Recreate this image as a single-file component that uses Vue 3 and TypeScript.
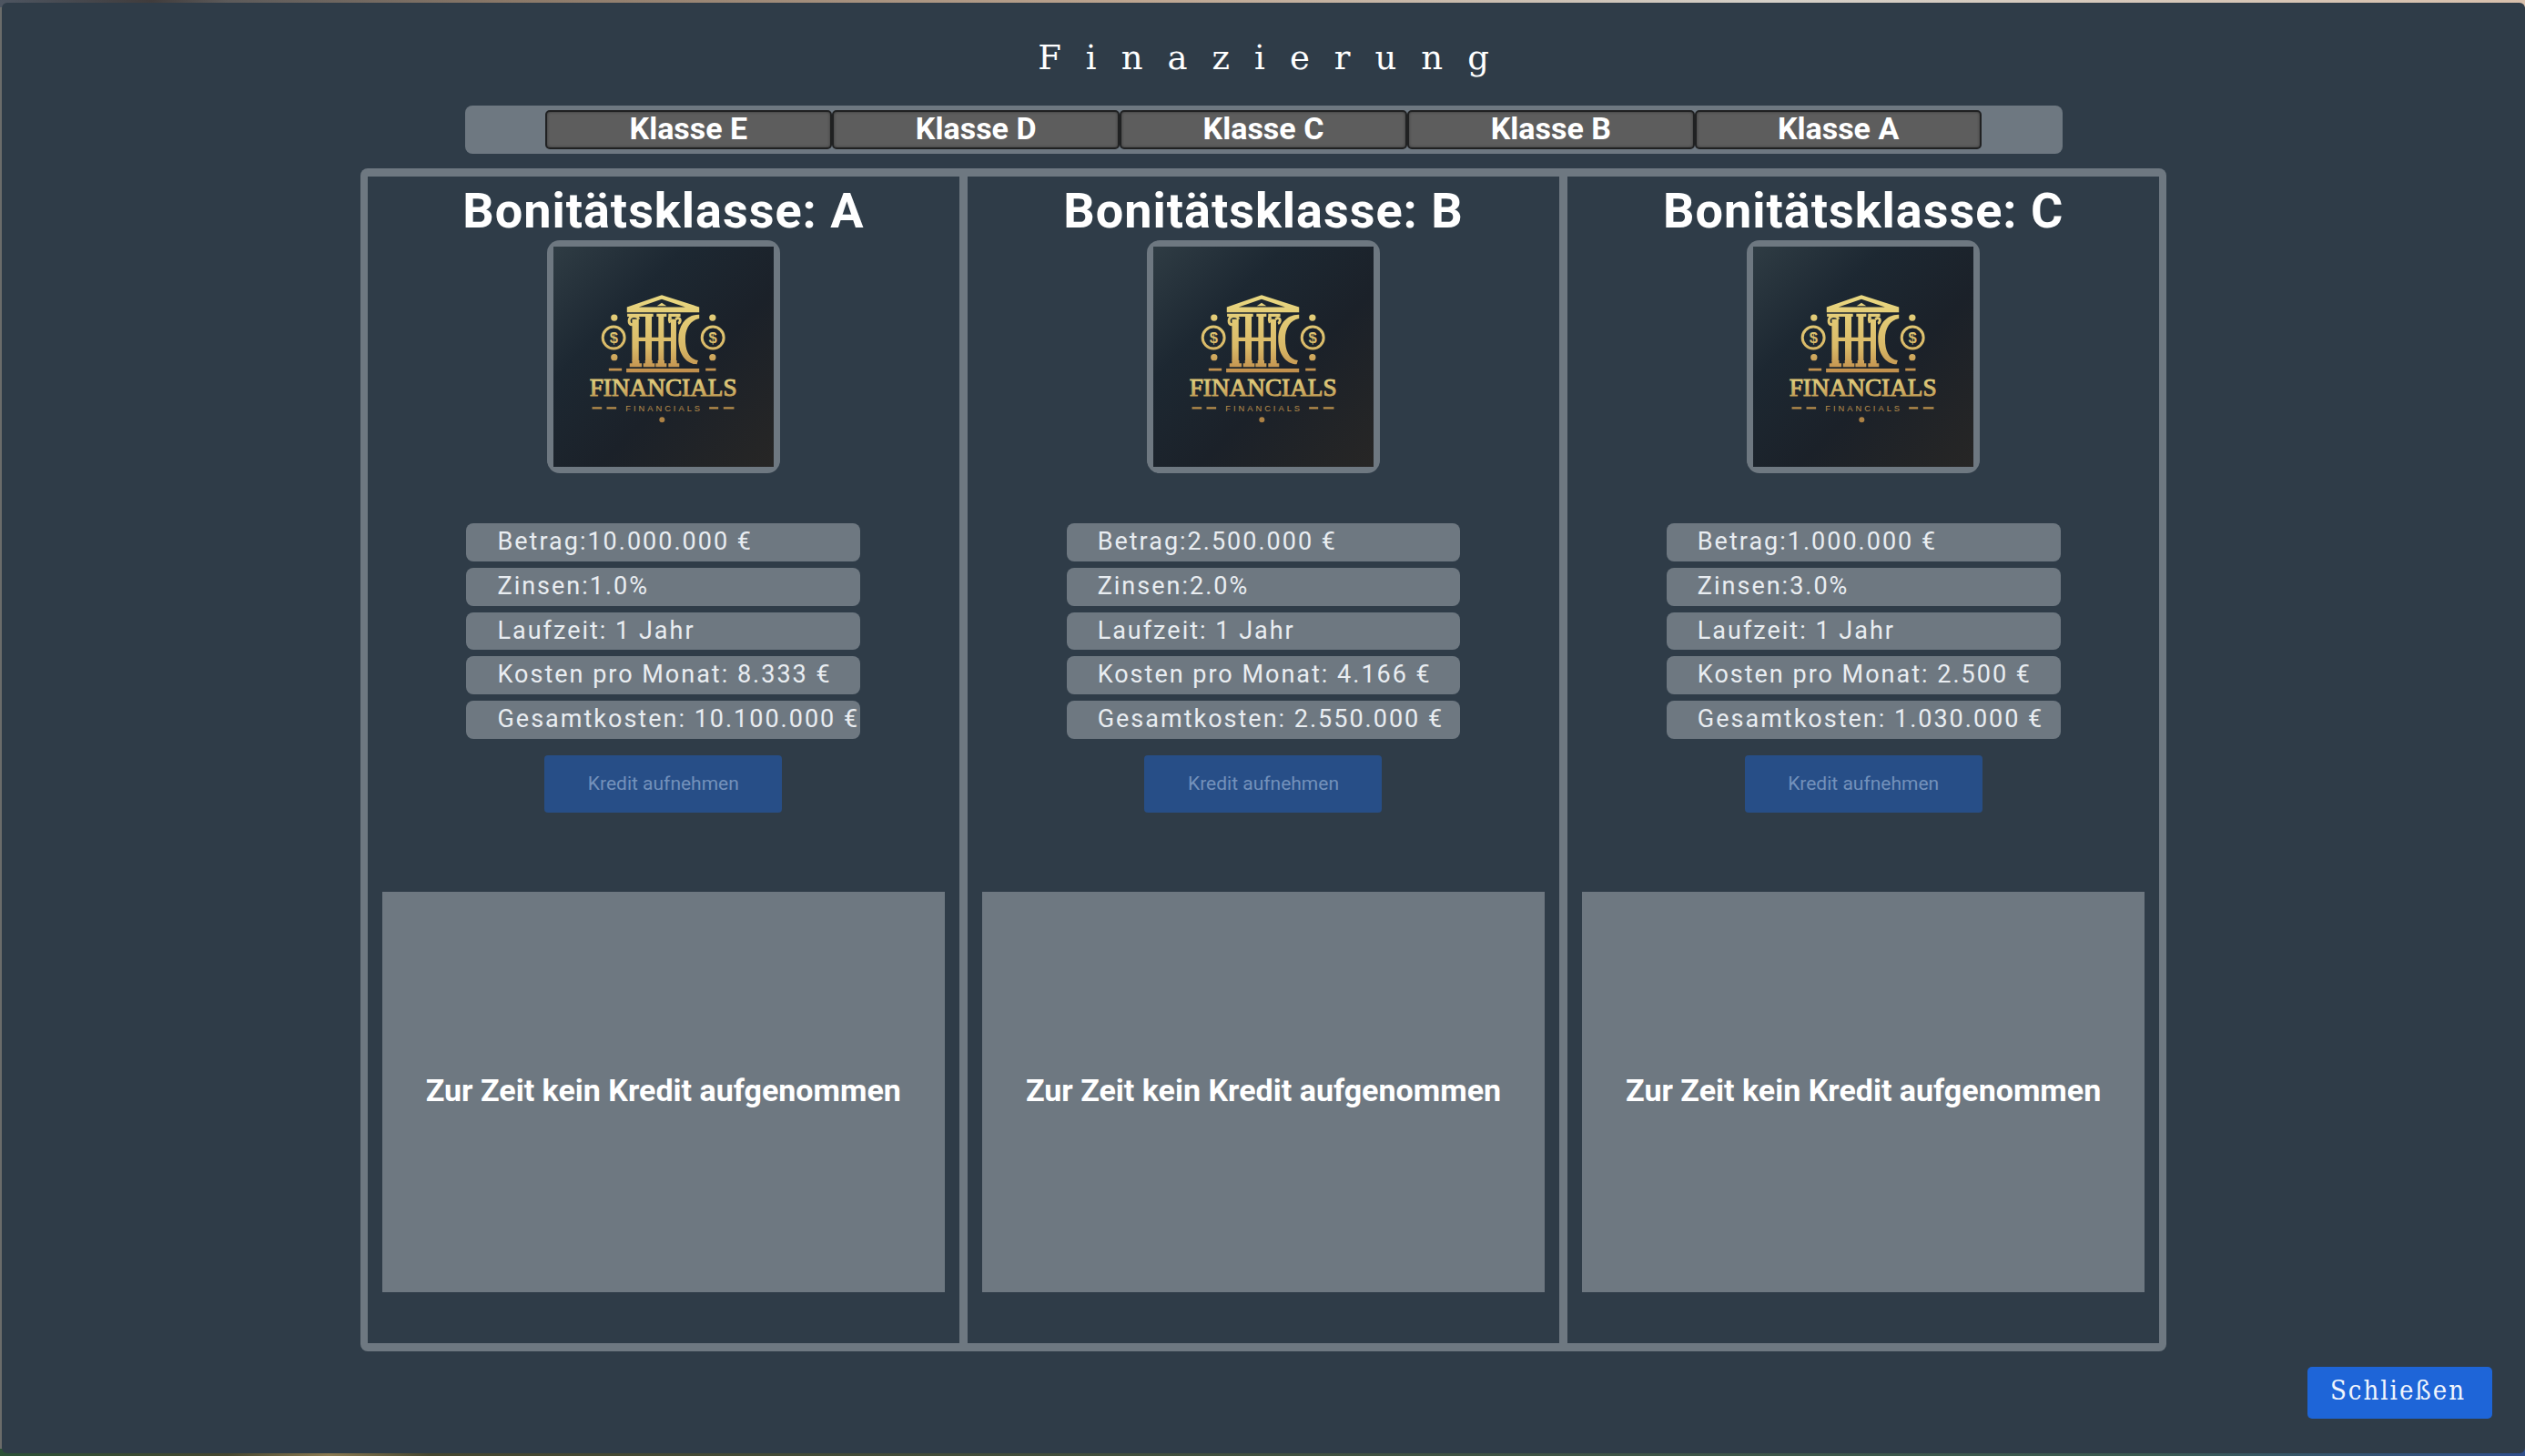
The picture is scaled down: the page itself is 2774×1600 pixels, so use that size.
<script setup lang="ts">
interface Loan {
  rating: string
  amount: string
  interest: string
  term: string
  monthly: string
  total: string
}

const classes: string[] = ['E', 'D', 'C', 'B', 'A']

const loans: Loan[] = [
  { rating: 'A', amount: '10.000.000', interest: '1.0', term: '1 Jahr', monthly: '8.333', total: '10.100.000' },
  { rating: 'B', amount: '2.500.000', interest: '2.0', term: '1 Jahr', monthly: '4.166', total: '2.550.000' },
  { rating: 'C', amount: '1.000.000', interest: '3.0', term: '1 Jahr', monthly: '2.500', total: '1.030.000' },
]

function details(loan: Loan): string[] {
  return [
    `Betrag:${loan.amount} €`,
    `Zinsen:${loan.interest}%`,
    `Laufzeit: ${loan.term}`,
    `Kosten pro Monat: ${loan.monthly} €`,
    `Gesamtkosten: ${loan.total} €`,
  ]
}
</script>

<template>
  <div class="backdrop">
    <main class="dialog">
      <h1 class="title">Finazierung</h1>

      <nav class="tabs" aria-label="Bonitätsklassen">
        <button v-for="name in classes" :key="name" type="button" class="tab">Klasse {{ name }}</button>
      </nav>

      <div class="loans">
        <section v-for="loan in loans" :key="loan.rating" class="loan">
          <h2 class="rating">Bonitätsklasse: {{ loan.rating }}</h2>

          <div class="logo">
            <svg viewBox="0 0 728 728" role="img" aria-label="Financials">
              <defs>
                <linearGradient :id="`gold-${loan.rating}`" x1="0" y1="160" x2="0" y2="590" gradientUnits="userSpaceOnUse">
                  <stop offset="0" stop-color="#ead982" />
                  <stop offset="0.4" stop-color="#d9b967" />
                  <stop offset="0.6" stop-color="#bf8c4b" />
                  <stop offset="0.66" stop-color="#e0cd7c" />
                  <stop offset="0.8" stop-color="#bf9650" />
                  <stop offset="1" stop-color="#a87d42" />
                </linearGradient>
                <linearGradient :id="`night-${loan.rating}`" x1="0" y1="0" x2="1" y2="1">
                  <stop offset="0" stop-color="#2f3c44" />
                  <stop offset="0.3" stop-color="#1d2832" />
                  <stop offset="0.6" stop-color="#1b2129" />
                  <stop offset="1" stop-color="#272625" />
                </linearGradient>
              </defs>
              <rect width="728" height="728" :fill="`url(#night-${loan.rating})`" />
              <g :fill="`url(#gold-${loan.rating})`">
                <!-- pediment -->
                <path fill-rule="evenodd" d="M243 200 L358 160 L482 200 V217 H243 Z M282 200 H436 L358 174 Z" />
                <path d="M342 196 L358 186 L374 196 Z" />
                <!-- capitals -->
                <path d="M244 222 H298 V232 H244 Z M295 222 H330 V232 H295 Z M341 222 H374 V232 H341 Z M380 222 H420 V232 H380 Z" />
                <!-- columns -->
                <path d="M260 240 H282 V378 H260 Z M304 232 H325 V378 H304 Z M347 232 H365 V378 H347 Z M388 240 H406 V378 H388 Z" />
                <path d="M278 300 H392 V313 H278 Z" />
                <!-- plinths -->
                <path d="M260 376 H284 V386 H292 V398 H252 V386 H260 Z M303 376 H327 V386 H335 V398 H297 V386 H303 Z M345 376 H367 V386 H374 V398 H338 V386 H345 Z M387 376 H408 V386 H416 V398 H380 V386 H387 Z" />
                <path d="M241 403 H482 V416 H241 Z" />
                <!-- crescent -->
                <path d="M482 225 C440 224 413 258 413 306 C413 354 438 388 474 389 L478 376 C448 372 436 344 436 306 C436 270 452 244 482 238 Z" />
                <!-- side dots and dashes -->
                <circle cx="201" cy="235" r="11" />
                <circle cx="201" cy="366" r="11" />
                <circle cx="526" cy="235" r="11" />
                <circle cx="526" cy="366" r="11" />
                <path d="M183 402 H226 V411 H183 Z M503 402 H537 V411 H503 Z" />
                <path d="M128 530 H160 V537 H128 Z M176 530 H208 V537 H176 Z M515 530 H545 V537 H515 Z M562 530 H597 V537 H562 Z" />
                <circle cx="359" cy="572" r="9" />
              </g>
              <g fill="none" :stroke="`url(#gold-${loan.rating})`" stroke-width="9">
                <circle cx="199" cy="301" r="36" />
                <circle cx="527" cy="301" r="36" />
                <path d="M282 240 C276 224 250 228 250 246 C250 262 272 262 270 248" />
                <path d="M388 240 C384 226 380 240 386 252 M404 240 C420 228 424 250 412 254" />
              </g>
              <g :fill="`url(#gold-${loan.rating})`" text-anchor="middle">
                <text class="coin" x="200" y="319">$</text>
                <text class="coin" x="527" y="319">$</text>
                <text class="brand" :stroke="`url(#gold-${loan.rating})`" x="363" y="494">FINANCIALS</text>
                <text class="brand-sub" x="366" y="545">FINANCIALS</text>
              </g>
            </svg>
          </div>

          <ul class="details">
            <li v-for="line in details(loan)" :key="line">{{ line }}</li>
          </ul>

          <button type="button" class="borrow" disabled>Kredit aufnehmen</button>

          <p class="status">Zur Zeit kein Kredit aufgenommen</p>
        </section>
      </div>

      <button type="button" class="close">Schließen</button>
    </main>
  </div>
</template>

<style>
body {
  margin: 0;
}
</style>

<style scoped>
* {
  box-sizing: border-box;
}

.backdrop {
  min-height: 100vh;
  display: flex;
  padding: 3px 0 3px 2px;
  background:
    linear-gradient(90deg, #4d5561 0%, #403c3c 6%, #5c5a5a 9%, #8a7868 20%, #bda590 45%, #d5d0c8 70%, #d8c0ac 100%) top / 100% 8px no-repeat,
    linear-gradient(90deg, #2c5137 0%, #45462f 9%, #8b7a50 13%, #45462f 17%, #3b5a50 85%, #2f4f8c 100%) bottom / 100% 8px no-repeat,
    #6b6c6a;
  font-family: Roboto, sans-serif;
  color: #fff;
}

.dialog {
  flex: 1;
  display: flex;
  flex-direction: column;
  align-items: center;
  padding: 34px 36px 38px;
  background: #2f3c48;
  border-radius: 6px;
}

.title {
  margin: 0 0 25px;
  padding-left: 27px;
  font: 400 37px/54px "DejaVu Serif", serif;
  letter-spacing: 27px;
}

.tabs {
  display: flex;
  width: 65%;
  height: 53px;
  padding: 5px 88px;
  background: #6e7881;
  border-radius: 8px;
}

.tab {
  flex: 1;
  padding: 0 0 4px;
  border: 2px solid #202122;
  border-radius: 5px;
  background: #5d5d5d;
  box-shadow: inset 0 0 3px #333;
  color: #fff;
  font: 700 34px/34px Roboto, sans-serif;
}

.loans {
  flex: 1;
  display: grid;
  grid-template-columns: repeat(3, 1fr);
  gap: 9px;
  width: 73.5%;
  margin: 16px 0 17px;
  padding: 9px 8px;
  background: #6e7881;
  border-radius: 8px;
}

.loan {
  display: flex;
  flex-direction: column;
  align-items: center;
  padding: 8px 16px 56px;
  background: #2f3c48;
}

.rating {
  margin: 0 0 2px;
  font-size: 54px;
  font-weight: 700;
  line-height: 60px;
  letter-spacing: 1px;
}

.logo {
  width: 256px;
  padding: 7px;
  background: #6e7881;
  border-radius: 14px;
}

.logo svg {
  display: block;
  width: 100%;
}

.coin {
  font: 700 50px "Liberation Sans", sans-serif;
}

.brand {
  font: 400 82px "Liberation Serif", serif;
  stroke-width: 3px;
}

.brand-sub {
  font: 400 28px "Liberation Sans", sans-serif;
  letter-spacing: 9px;
}

.details {
  display: grid;
  grid-template-columns: minmax(0, 1fr);
  grid-template-rows: repeat(5, 1fr);
  gap: 7px;
  width: 70%;
  height: 237px;
  margin: 55px 0 18px;
  padding: 0;
  list-style: none;
}

.details li {
  padding-left: 34px;
  background: #6e7881;
  border-radius: 8px;
  color: #e9edf1;
  font-size: 27px;
  line-height: 40px;
  letter-spacing: 2px;
  white-space: nowrap;
}

.borrow {
  width: 261px;
  height: 63px;
  padding: 0 0 2px;
  border: 0;
  border-radius: 4px;
  background: #274e87;
  color: #7391bb;
  font: 400 21px/60px Roboto, sans-serif;
}

.status {
  flex: 1;
  display: flex;
  align-items: center;
  justify-content: center;
  width: 100%;
  min-height: 240px;
  margin: 87px 0 0;
  padding-bottom: 5px;
  background: #6e7881;
  font-size: 34px;
  font-weight: 700;
}

.close {
  align-self: flex-end;
  width: 203px;
  height: 57px;
  padding: 0 4px 6px 0;
  border: 0;
  border-radius: 5px;
  background: #1e65d8;
  color: #f0f5fd;
  font: 400 29px/50px "DejaVu Serif Condensed", "DejaVu Serif", serif;
  letter-spacing: 2px;
}
</style>
